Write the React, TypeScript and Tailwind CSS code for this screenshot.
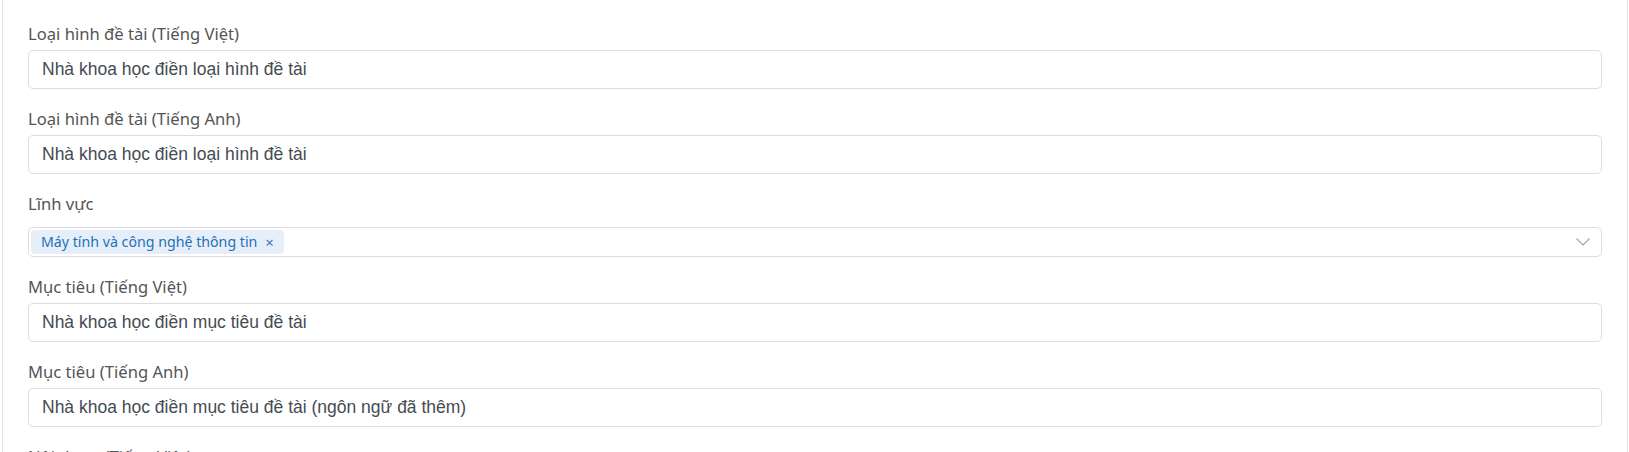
interface TextFieldProps {
  label: string
  value: string
}

function TextField({ label, value }: TextFieldProps) {
  return (
    <div className="mb-[19px]">
      <label className="block text-[16.6px] leading-[21px] text-[#555] mb-[6px] font-['Noto_Sans',sans-serif]">
        {label}
      </label>
      <div className="h-[39px] flex items-center border border-[#dcdce6] rounded-[5px] px-[13px] text-[17.5px] text-[#454c53] font-['Liberation_Sans',Arial,sans-serif]">
        {value}
      </div>
    </div>
  )
}

function TagSelect({ label, tags }: { label: string; tags: string[] }) {
  return (
    <div className="mb-[19px]">
      <label className="block text-[16.6px] leading-[21px] text-[#555] mb-[13px] font-['Noto_Sans',sans-serif]">
        {label}
      </label>
      <div className="h-[30px] flex items-center border border-[#dcdce6] rounded-[5px] pl-[2px] pr-[11px]">
        <div className="flex-1 flex gap-1">
          {tags.map((t) => (
            <span
              key={t}
              className="h-[24px] flex items-center gap-[8px] rounded-[4px] bg-[#e6eff9] pl-[10px] pr-[10px] text-[14.2px] text-[#1f6fb8] font-['Noto_Sans',sans-serif]"
            >
              {t}
              <span className="text-[15px] leading-none text-[#3a76b5]">×</span>
            </span>
          ))}
        </div>
        <svg width="14" height="8" viewBox="0 0 14 8" fill="none" stroke="#a3a3ab" strokeWidth="1.1">
          <path d="M0.5 0.5 7 7 13.5 0.5" />
        </svg>
      </div>
    </div>
  )
}

export default function App() {
  return (
    <div className="w-[1629px] h-[452px] bg-white overflow-hidden">
      <div className="ml-[2px] mr-[1px] h-full border-x border-[#e3e3ee] px-[25px] pt-[23px]">
        <TextField label="Loại hình đề tài (Tiếng Việt)" value="Nhà khoa học điền loại hình đề tài" />
        <TextField label="Loại hình đề tài (Tiếng Anh)" value="Nhà khoa học điền loại hình đề tài" />
        <TagSelect label="Lĩnh vực" tags={['Máy tính và công nghệ thông tin']} />
        <TextField label="Mục tiêu (Tiếng Việt)" value="Nhà khoa học điền mục tiêu đề tài" />
        <TextField label="Mục tiêu (Tiếng Anh)" value="Nhà khoa học điền mục tiêu đề tài (ngôn ngữ đã thêm)" />
        <TextField label="Nội dung (Tiếng Việt)" value="Nhà khoa học điền nội dung đề tài" />
      </div>
    </div>
  )
}
